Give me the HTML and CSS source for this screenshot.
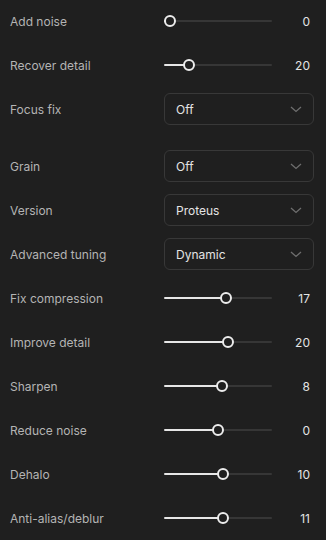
FILE: index.html
```html
<!DOCTYPE html>
<html lang="en">
    <head>
        <meta charset="UTF-8">
        <meta name="viewport" content="width=device-width, initial-scale=1.0">
        <title>Enhance settings</title>
        <link rel="stylesheet" href="styles.css">
    </head>
    <body>
        <div class="panel">
            <!-- Basic -->
            <div class="group">
                <div class="row">
                    <label class="row-label">Add noise</label>
                    <input class="slider" type="range" min="0" max="100" value="0" style="--fill: 6px">
                    <span class="row-value">0</span>
                </div>
                <div class="row">
                    <label class="row-label">Recover detail</label>
                    <input class="slider" type="range" min="0" max="100" value="20" style="--fill: 25.2px">
                    <span class="row-value">20</span>
                </div>
                <div class="row">
                    <label class="row-label">Focus fix</label>
                    <button class="select" type="button">
                        <span>Off</span>
                        <svg class="chevron" width="12" height="7" viewBox="0 0 12 7"><polyline points="1,1 6,5.5 11,1"/></svg>
                    </button>
                </div>
            </div>

            <!-- Model -->
            <div class="group">
                <div class="row">
                    <label class="row-label">Grain</label>
                    <button class="select" type="button">
                        <span>Off</span>
                        <svg class="chevron" width="12" height="7" viewBox="0 0 12 7"><polyline points="1,1 6,5.5 11,1"/></svg>
                    </button>
                </div>
                <div class="row">
                    <label class="row-label">Version</label>
                    <button class="select" type="button">
                        <span>Proteus</span>
                        <svg class="chevron" width="12" height="7" viewBox="0 0 12 7"><polyline points="1,1 6,5.5 11,1"/></svg>
                    </button>
                </div>
                <div class="row">
                    <label class="row-label">Advanced tuning</label>
                    <button class="select" type="button">
                        <span>Dynamic</span>
                        <svg class="chevron" width="12" height="7" viewBox="0 0 12 7"><polyline points="1,1 6,5.5 11,1"/></svg>
                    </button>
                </div>
                <div class="row">
                    <label class="row-label">Fix compression</label>
                    <input class="slider" type="range" min="-100" max="100" value="17" style="--fill: 62.2px">
                    <span class="row-value">17</span>
                </div>
                <div class="row">
                    <label class="row-label">Improve detail</label>
                    <input class="slider" type="range" min="-100" max="100" value="20" style="--fill: 63.6px">
                    <span class="row-value">20</span>
                </div>
                <div class="row">
                    <label class="row-label">Sharpen</label>
                    <input class="slider" type="range" min="-100" max="100" value="8" style="--fill: 57.8px">
                    <span class="row-value">8</span>
                </div>
                <div class="row">
                    <label class="row-label">Reduce noise</label>
                    <input class="slider" type="range" min="-100" max="100" value="0" style="--fill: 54px">
                    <span class="row-value">0</span>
                </div>
                <div class="row">
                    <label class="row-label">Dehalo</label>
                    <input class="slider" type="range" min="-100" max="100" value="10" style="--fill: 58.8px">
                    <span class="row-value">10</span>
                </div>
                <div class="row">
                    <label class="row-label">Anti-alias/deblur</label>
                    <input class="slider" type="range" min="-100" max="100" value="11" style="--fill: 59.3px">
                    <span class="row-value">11</span>
                </div>
            </div>
        </div>
    </body>
</html>
```
FILE: styles.css
```css
body {
    margin: 0;
    background-color: #1f1f1f;
    font-family: Inter, "Noto Sans", sans-serif;
    font-size: 12px;
}
.panel {
    padding: 5px 12px 0 10px;
    display: flex;
    flex-direction: column;
    gap: 25px;
}
.group {
    display: flex;
    flex-direction: column;
    gap: 12px;
}
.row {
    display: flex;
    align-items: center;
    height: 32px;
}
.row-label {
    width: 154px;
    flex-shrink: 0;
    color: #b4b4b4;
}
.row-value {
    flex: 1;
    text-align: right;
    padding-right: 4px;
    color: #e4e4e4;
}
.slider {
    -webkit-appearance: none;
    appearance: none;
    width: 108px;
    height: 12px;
    margin: 0;
    background: transparent;
}
.slider::-webkit-slider-runnable-track {
    height: 2px;
    border-radius: 1px;
    background: linear-gradient(to right, #e6e6e6 var(--fill), #363636 var(--fill));
}
.slider::-webkit-slider-thumb {
    -webkit-appearance: none;
    width: 12px;
    height: 12px;
    margin-top: -5px;
    border: 2px solid #ececec;
    border-radius: 50%;
    background-color: #1f1f1f;
    box-sizing: border-box;
}
.select {
    flex: 1;
    height: 32px;
    display: flex;
    align-items: center;
    justify-content: space-between;
    padding: 0 11px 0 11px;
    border: 1px solid #383838;
    border-radius: 6px;
    background-color: #1f1f1f;
    color: #e4e4e4;
    font-family: inherit;
    font-size: 12px;
}
.chevron polyline {
    fill: none;
    stroke: #6e6e6e;
    stroke-width: 1.3;
}
```
